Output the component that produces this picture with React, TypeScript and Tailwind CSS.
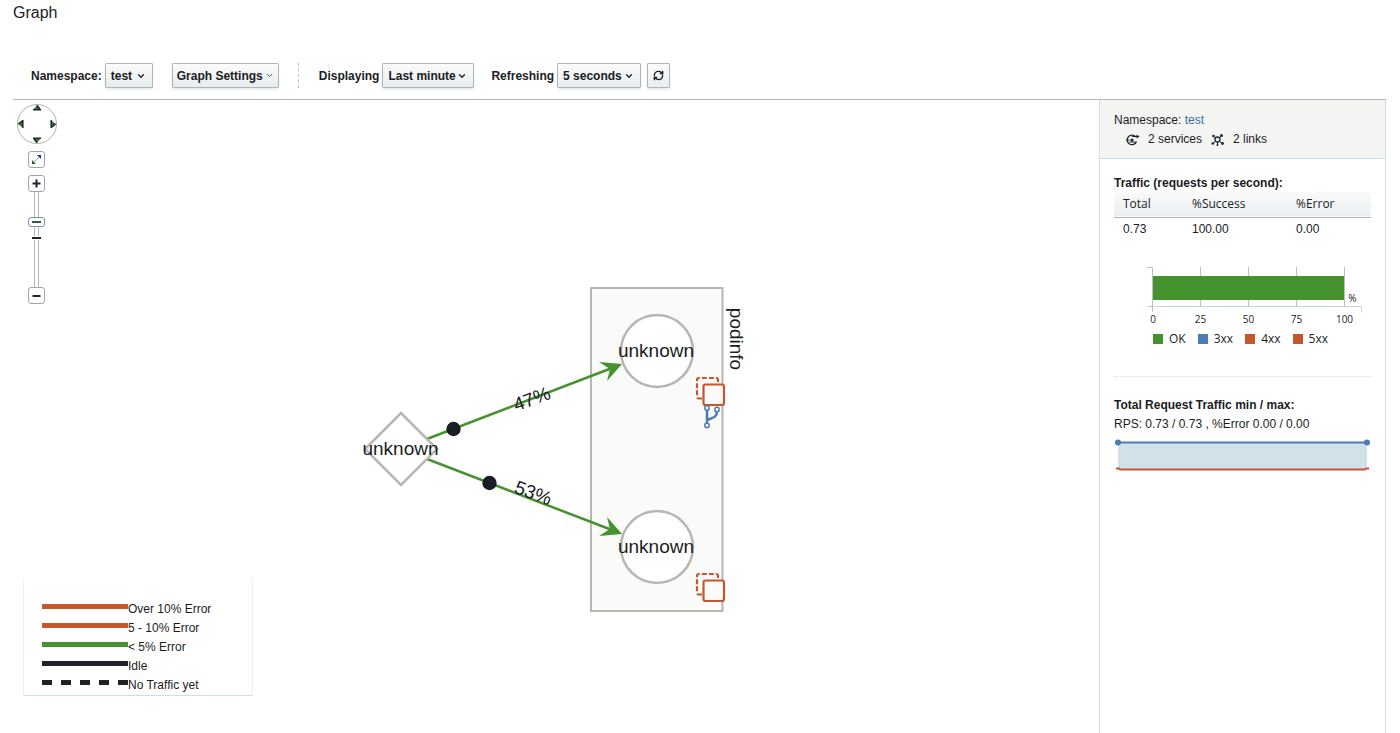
import type { ReactNode } from "react";
import { ChevronDown, RefreshCw } from "lucide-react";

const control =
  "h-[25px] rounded-[1px] border border-[#b3b6b6] bg-linear-to-b from-[#fbfbfa] to-[#e6edf0] text-xs font-bold shadow-[0_2px_3px_rgba(0,0,0,0.08)]";

type DropProps = { id: string; label: string; value: string; width: string };

function Drop({ id, label, value, width }: DropProps) {
  return (
    <div className="flex items-center gap-[3px]">
      <label htmlFor={id} className="whitespace-nowrap">
        {label}
      </label>
      <div className={`relative ${width}`}>
        <select id={id} className={`block w-full appearance-none pl-[5px] ${control}`}>
          <option>{value}</option>
        </select>
        <ChevronDown size={10} strokeWidth={3} className="pointer-events-none absolute top-2 right-[7px]" />
      </div>
    </div>
  );
}

function PanButton({ label, className }: { label: string; className: string }) {
  return (
    <button aria-label={label} className={`absolute ${className}`}>
      <svg width="10" height="6" viewBox="0 0 10 6" className="block">
        <path d="M5 0 9 5H1Z" fill="#3c7a32" />
        <path d="M1 4.800H9M5 0.500 8 4" stroke="#1c2630" strokeWidth="1.500" />
      </svg>
    </button>
  );
}

const boxButton =
  "flex h-[17px] w-[17px] items-center justify-center rounded-[3px] border border-[#9da7b3] bg-white";

function Navigator() {
  return (
    <div className="absolute top-1 left-1 flex w-10 flex-col items-start">
      <div className="relative h-10 w-10 rounded-full border border-[#b3b0aa]">
        <PanButton label="Pan up" className="top-0 left-[14px]" />
        <PanButton label="Pan right" className="top-4 right-[-2px] rotate-90" />
        <PanButton label="Pan down" className="bottom-0 left-[14px] rotate-180" />
        <PanButton label="Pan left" className="top-4 left-[-2px] -rotate-90" />
      </div>
      <div className="flex w-[17px] flex-col pt-[7px] ml-[11px]">
        <button aria-label="Fit to screen" className={boxButton}>
          <svg width="11" height="11" viewBox="0 0 11 11" fill="none" className="shrink-0">
            <path d="M2 9 9 2" stroke="#6f7a80" strokeDasharray="2 1" />
            <path d="M10 1V5L6 1Z" fill="#1d3c5c" />
            <path d="M1 10V6L5 10Z" fill="#2c5f27" />
          </svg>
        </button>
        <button aria-label="Zoom in" className={`mt-[7px] ${boxButton}`}>
          <svg width="9" height="9" viewBox="0 0 9 9" stroke="#1c2733" strokeWidth="2">
            <path d="M4.500 0.500V8.500M0.500 4.500H8.500" />
          </svg>
        </button>
        <div className="relative flex h-[95px] w-[17px] justify-center">
          <div className="w-[5px] border-x border-[#b3b6b8] bg-white" />
          <div className="absolute top-[45px] left-1 h-[2px] w-[9px] bg-[#222428] outline outline-white" />
          <input
            type="range"
            aria-label="Zoom level"
            min={0}
            max={100}
            defaultValue={71}
            className="absolute inset-0 h-full w-full appearance-none bg-transparent [direction:rtl] [writing-mode:vertical-lr] [&::-webkit-slider-thumb]:h-[10px] [&::-webkit-slider-thumb]:w-[17px] [&::-webkit-slider-thumb]:appearance-none [&::-webkit-slider-thumb]:rounded-[3px] [&::-webkit-slider-thumb]:border [&::-webkit-slider-thumb]:border-[#7c93b0] [&::-webkit-slider-thumb]:bg-white [&::-webkit-slider-thumb]:bg-[linear-gradient(#2f5d3c,#2f5d3c)] [&::-webkit-slider-thumb]:bg-[length:9px_2px] [&::-webkit-slider-thumb]:bg-center [&::-webkit-slider-thumb]:bg-no-repeat"
          />
        </div>
        <button aria-label="Zoom out" className={boxButton}>
          <svg width="9" height="9" viewBox="0 0 9 9" stroke="#1c2733" strokeWidth="2">
            <path d="M0.500 5H8.500" />
          </svg>
        </button>
      </div>
    </div>
  );
}

function Stack({ x, y }: { x: number; y: number }) {
  return (
    <g transform={`translate(${x} ${y})`} stroke="#c6572d" strokeWidth="2.200">
      <path d="M6 21.500H3Q1 21.500 1 19.500V3Q1 1 3 1H20Q22 1 22 3V6" fill="none" strokeDasharray="5 2" />
      <rect x="7.500" y="7.500" width="20.500" height="20.500" rx="2" fill="#fafaf9" />
    </g>
  );
}

function Graph() {
  return (
    <svg
      role="img"
      aria-label="Service graph"
      width="390"
      height="330"
      viewBox="361 284 390 330"
      className="mt-[184px] shrink-0"
      fontSize="19"
      fill="#1b1d24"
    >
      <rect x="591" y="288" width="131.500" height="323" fill="#fafaf9" stroke="#b9b5b0" strokeWidth="2" />
      <g stroke="#45932f" strokeWidth="2.500">
        <path d="M427 439 612 368M427 459 612 530" />
      </g>
      <g fill="#45932f">
        <path d="M622 364 607 381 610 369 599 362Z" />
        <path d="M622 534 607 517 610 529 599 536Z" />
      </g>
      <g fill="#fff" stroke="#b9b5b0" strokeWidth="2.500">
        <path d="M401 413 437 449 401 485 365 449Z" />
        <circle cx="657" cy="351" r="36" />
        <circle cx="657" cy="547" r="36" />
      </g>
      <circle cx="453.500" cy="429" r="7.200" />
      <circle cx="489.500" cy="483" r="7.200" />
      <Stack x={696} y={377} />
      <Stack x={696} y={573} />
      <g fill="none" stroke="#4d7bb3" strokeWidth="2.500">
        <path d="M707 410V423M707 420C712 418 717 418 717 411" />
        <g fill="#fff" strokeWidth="1.500">
          <circle cx="707" cy="408" r="2.200" />
          <circle cx="717" cy="409.500" r="2.200" />
          <circle cx="707" cy="425.500" r="2.200" />
        </g>
      </g>
      <g textAnchor="middle">
        <text x="400.500" y="455">unknown</text>
        <text x="656" y="357">unknown</text>
        <text x="656" y="553">unknown</text>
        <text transform="translate(534 405) rotate(-20)">47%</text>
        <text transform="translate(531 499) rotate(20)">53%</text>
        <text transform="translate(730 339) rotate(90)">podinfo</text>
      </g>
    </svg>
  );
}

const legend = [
  { text: "Over 10% Error", line: "bg-[#c6572d]" },
  { text: "5 - 10% Error", line: "bg-[#c6572d]" },
  { text: "< 5% Error", line: "bg-[#45932f]" },
  { text: "Idle", line: "bg-[#222026]" },
  {
    text: "No Traffic yet",
    line: "bg-[repeating-linear-gradient(90deg,#222026_0_10px,transparent_10px_19px)]",
  },
];

function Legend() {
  return (
    <ul className="absolute bottom-[37px] left-[10px] w-[230px] border-x border-b border-x-[#eff2f4] border-b-[#cfdfe8] bg-white pt-[21px] pb-px pl-[18px]">
      {legend.map((row) => (
        <li key={row.text} className="flex h-[19px] items-center">
          <span className={`mb-1 h-[5px] w-[86px] ${row.line}`} />
          {row.text}
        </li>
      ))}
    </ul>
  );
}

function Key({ color, children }: { color: string; children: ReactNode }) {
  return (
    <li className="flex items-center gap-1.5">
      <span className={`h-[10px] w-[10px] ${color}`} />
      {children}
    </li>
  );
}

function TrafficChart() {
  return (
    <figure className="mt-[23px] font-['Open_Sans',sans-serif]">
      <svg
        role="img"
        aria-label="Responses by status"
        width="220"
        height="62"
        viewBox="1146 264 220 62"
        className="ml-8"
        fontSize="10"
        fill="#1b1d24"
      >
        <g fill="none" stroke="#b9c0c4">
          <path d="M1147 267.500H1152.500V312M1200.500 267V306M1248.500 267V306M1296.500 267V306M1344.500 267V306" />
          <path d="M1147 306.500H1361.500V312" stroke="#c3d5df" />
        </g>
        <rect x="1153" y="276" width="191" height="24" fill="#45932f" />
        <g textAnchor="middle">
          <text x="1153" y="323">0</text>
          <text x="1200.500" y="323">25</text>
          <text x="1248.500" y="323">50</text>
          <text x="1296.500" y="323">75</text>
          <text x="1344.500" y="323">100</text>
          <text x="1352.500" y="302">%</text>
        </g>
      </svg>
      <ul className="mt-1 ml-[39px] flex h-[18px] gap-3">
        <Key color="bg-[#45932f]">OK</Key>
        <Key color="bg-[#4d7bb3]">3xx</Key>
        <Key color="bg-[#c6572d]">4xx</Key>
        <Key color="bg-[#c6572d]">5xx</Key>
      </ul>
    </figure>
  );
}

function Summary() {
  return (
    <aside className="w-[287px] shrink-0 border-x border-[#d3dee4]">
      <header className="h-[59px] border-b border-[#c9dce7] bg-[#f4f4f3] pt-[11px] pl-[14px] leading-[19px]">
        <p>
          Namespace:{" "}
          <a href="#test" className="text-[#3b6ea8]">
            test
          </a>
        </p>
        <p className="flex items-center pl-3">
          <svg width="14" height="12" viewBox="0 0 14 12" fill="none" stroke="#1c2733" className="mr-2">
            <path d="M9.800 3A4.800 4.800 0 1 0 10.500 7.500" strokeWidth="1.300" />
            <circle cx="6" cy="6" r="1.600" fill="#1c2733" stroke="none" />
            <path d="M0 6H3.500M3.500 8H9.500M6 2.500H11" />
            <path d="M10.500 0.500 13.500 2.500 10.500 4.500Z" fill="#1c2733" stroke="none" />
          </svg>
          2 services
          <svg width="14" height="12" viewBox="0 0 14 12" fill="none" stroke="#1c2733" className="mr-2 ml-[9px]">
            <circle cx="6.500" cy="5.500" r="2.500" strokeWidth="1.300" />
            <path d="M2.500 2.500 4.500 4M10.500 2 8.500 3.800M2 9.500 4.500 7.500M11.500 9.500 8.500 7.500M6.500 8V11" />
            <g fill="#1c2733" stroke="none">
              <circle cx="2.500" cy="2" r="1.300" />
              <circle cx="10.500" cy="1.500" r="1.500" />
              <circle cx="1.800" cy="9.500" r="1.300" />
              <circle cx="11.500" cy="9.500" r="1.400" />
              <circle cx="6.500" cy="11" r="1" />
            </g>
          </svg>
          2 links
        </p>
      </header>
      <section className="px-[14px] pt-[15px]">
        <h2 className="leading-[18px] font-bold">Traffic (requests per second):</h2>
        <table className="w-full table-fixed text-left">
          <thead>
            <tr className="h-[25px] border-b border-[#b3b0aa] bg-linear-to-b from-[#fafafa] to-[#e9eff2] font-['Open_Sans',sans-serif]">
              <th className="w-[68px] pl-[9px] font-medium">Total</th>
              <th className="w-[104px] pl-[10px] font-medium">%Success</th>
              <th className="pl-[10px] font-medium">%Error</th>
            </tr>
          </thead>
          <tbody>
            <tr className="h-6">
              <td className="pl-[9px]">0.73</td>
              <td className="pl-[10px]">100.00</td>
              <td className="pl-[10px]">0.00</td>
            </tr>
          </tbody>
        </table>
        <TrafficChart />
        <hr className="mt-[28px] border-dotted border-[#d3dde2]" />
        <h2 className="mt-[19px] leading-[19px] font-bold">Total Request Traffic min / max:</h2>
        <p className="leading-[19px]">RPS: 0.73 / 0.73 , %Error 0.00 / 0.00</p>
        <svg
          role="img"
          aria-label="Request traffic over time"
          width="256"
          height="34"
          viewBox="0 0 256 34"
          className="mt-[3px]"
        >
          <rect x="4" y="5" width="249" height="27" fill="#d2e1e9" />
          <path d="M4 5.500H253" stroke="#4d7bb3" strokeWidth="2" />
          <path d="M2 31.500H5L6 32.500H251L252 31.500H255" fill="none" stroke="#c6572d" strokeWidth="2" />
          <circle cx="4" cy="5.500" r="3" fill="#4d7bb3" />
          <circle cx="253" cy="5.500" r="3" fill="#4d7bb3" />
        </svg>
      </section>
    </aside>
  );
}

export default function App() {
  return (
    <div className="flex min-h-screen flex-col bg-white pr-[14px] pl-[13px] font-['Liberation_Sans',Arial,sans-serif] text-xs text-[#1b1d24]">
      <h1 className="pt-[3px] text-base leading-5">Graph</h1>
      <div className="mt-10 flex h-9 items-start pl-[18px] font-bold">
        <Drop id="namespace" label="Namespace:" value="test" width="w-12" />
        <button className={`ml-[19px] flex w-[107px] items-center justify-center gap-0.5 ${control}`}>
          Graph Settings
          <ChevronDown size={9} strokeWidth={2} />
        </button>
        <div className="mr-5 ml-[19px] h-[25px] border-l border-dashed border-[#b5c6d0]" />
        <Drop id="duration" label="Displaying" value="Last minute" width="w-[92px]" />
        <div className="w-[17px]" />
        <Drop id="refresh" label="Refreshing" value="5 seconds" width="w-[84px]" />
        <button aria-label="Refresh" className={`ml-1.5 flex w-[23px] items-center justify-center ${control}`}>
          <RefreshCw size={11} strokeWidth={3} />
        </button>
      </div>
      <main className="flex flex-1 border-t border-[#b3b9bd]">
        <div className="relative flex flex-1 items-start justify-center">
          <Graph />
          <Navigator />
          <Legend />
        </div>
        <Summary />
      </main>
    </div>
  );
}
